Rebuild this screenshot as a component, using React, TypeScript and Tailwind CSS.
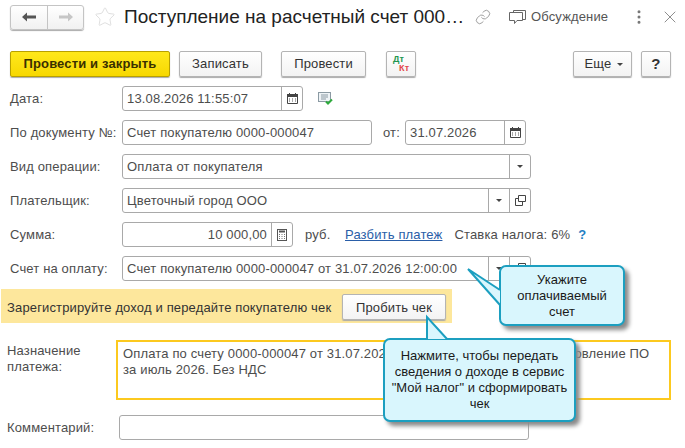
import { ReactNode } from "react"
import { Star, X, Link, EllipsisVertical } from "lucide-react"

function Btn({ className, children }: { className: string; children: ReactNode }) {
  return (
    <div
      className={
        "flex h-[26px] items-center justify-center rounded-[2px] border border-[#b4b4b4] bg-gradient-to-b from-white to-[#f3f3f3] text-[#333] shadow-[0_1px_1px_#aaa] " +
        className
      }
    >
      {children}
    </div>
  )
}

function CalendarIcon() {
  return (
    <svg width="13" height="13" viewBox="0 0 13 13" className="block">
      <path d="M1.5 2.5h10v9h-10z" fill="none" stroke="#444" />
      <path d="M1 2h11v3H1z" fill="#444" />
      <path d="M3.5 1v2M9.5 1v2" stroke="#444" />
      <path d="M3 7h1M6 7h1M9 7h1M3 9h1M6 9h1M9 9h1" stroke="#555" />
    </svg>
  )
}

function CalcIcon() {
  return (
    <svg width="12" height="14" viewBox="0 0 12 14" className="block">
      <rect x="1.5" y="1.5" width="9" height="11" fill="none" stroke="#555" />
      <path d="M3 3.5h6" stroke="#555" strokeWidth="2" />
      <path d="M3 6.5h1M5.5 6.5h1M8 6.5h1M3 8.5h1M5.5 8.5h1M8 8.5h1M3 10.5h1M5.5 10.5h1M8 10.5h1" stroke="#777" />
    </svg>
  )
}

function Caret() {
  return <div className="h-0 w-0 border-x-[3px] border-t-[3px] border-x-transparent border-t-[#444]" />
}

function OpenIcon() {
  return (
    <svg width="11" height="11" viewBox="0 0 11 11" className="block">
      <path d="M0.5 3.5h7v7h-7z" fill="none" stroke="#444" />
      <path d="M3.5 0.5h7v6h-7z" fill="#fff" stroke="#444" />
    </svg>
  )
}

function Side({ children, w = "w-[21px]" }: { children: ReactNode; w?: string }) {
  return <div className={"flex h-full shrink-0 items-center justify-center border-l border-[#a9a9a9] " + w}>{children}</div>
}

function Field({ className, children, text, right }: { className: string; children?: ReactNode; text?: string; right?: boolean }) {
  return (
    <div className={"flex h-[25px] items-center rounded-[3px] border border-[#a9a9a9] bg-white " + className}>
      <div className={"min-w-0 flex-1 truncate px-[4px] pt-[1px] text-[#4d4d4d] " + (right ? "text-right" : "")}>{text}</div>
      {children}
    </div>
  )
}

function Row({ label, children }: { label: string; children: ReactNode }) {
  return (
    <div className="mt-[9px] flex h-[25px] items-center pl-[10px]">
      <div className="w-[112px] shrink-0 pt-[1px] text-[#4d4d4d]">{label}</div>
      {children}
    </div>
  )
}

function Bubble({ className, tail, children }: { className: string; tail: string; children: ReactNode }) {
  return (
    <>
      <div
        className={
          "absolute flex flex-col items-center justify-center rounded-[7px] border-2 border-[#1c9fc0] bg-[#d9f6fd] text-center leading-[16px] tracking-normal text-[#1a1a1a] shadow-[4px_4px_4px_#8a8a8a] " +
          className
        }
      >
        {children}
      </div>
      <svg className="absolute top-0 left-0" width="685" height="448">
        <path d={tail} fill="#d9f6fd" stroke="#1c9fc0" strokeWidth="2" />
      </svg>
    </>
  )
}

export default function App() {
  return (
    <div className="relative h-[448px] w-[685px] overflow-hidden bg-white font-['Liberation_Sans',Arial,sans-serif] text-[13px] tracking-[0.15px]">
      {/* header */}
      <div className="flex h-[34px] items-center pl-[10px]">
        <div className="flex h-[25px] w-[74px] rounded-[3px] border border-[#c4c4c4] bg-gradient-to-b from-white to-[#f1f1f1] shadow-[0_1px_1px_#aaa]">
          <div className="flex w-[37px] items-center justify-center border-r border-[#c4c4c4]">
            <svg width="14" height="10" viewBox="0 0 14 10"><path d="M0 5l5-4.5v3h9v3H5v3z" fill="#555" /></svg>
          </div>
          <div className="flex flex-1 items-center justify-center">
            <svg width="14" height="10" viewBox="0 0 14 10"><path d="M14 5L9 .5v3H0v3h9v3z" fill="#c6c6c6" /></svg>
          </div>
        </div>
        <Star size={22} strokeWidth={1} className="ml-[10px] text-[#dcdcdc]" />
        <div className="ml-[8px] w-[334px] whitespace-nowrap text-[19px] tracking-normal text-[#222]">Поступление на расчетный счет 000…</div>
        <Link size={16} strokeWidth={1.2} className="ml-[17px] text-[#888]" />
        <svg width="17" height="16" viewBox="0 0 17 16" className="ml-[18px]">
          <path d="M4.5 3V1.5h12v9H14" fill="none" stroke="#666" />
          <path d="M.5 3.5h13v8H8l-2.5 3v-3h-5z" fill="#fff" stroke="#666" />
        </svg>
        <div className="ml-[5px] text-[#555]">Обсуждение</div>
        <EllipsisVertical size={18} className="ml-[22px] text-[#777]" />
        <X size={20} strokeWidth={1} className="ml-[12px] text-[#777]" />
      </div>

      {/* command bar */}
      <div className="mt-[17px] flex items-center pl-[10px]">
        <div className="flex h-[26px] w-[160px] items-center justify-center rounded-[2px] border border-[#b8a000] bg-gradient-to-b from-[#ffe81a] to-[#f7d800] font-bold text-[#3a3000] shadow-[0_1px_1px_#aaa]">
          Провести и закрыть
        </div>
        <Btn className="ml-[9px] w-[83px]">Записать</Btn>
        <Btn className="ml-[19px] w-[85px]">Провести</Btn>
        <Btn className="relative ml-[20px] w-[30px]">
          <span className="absolute top-[3px] left-[6px] text-[9px] leading-[8px] font-bold text-[#1e9650]">Дт</span>
          <span className="absolute top-[12px] left-[12px] text-[9px] leading-[8px] font-bold text-[#e2474b]">Кт</span>
        </Btn>
        <Btn className="ml-[157px] w-[59px] gap-[6px] pl-[3px]">
          Еще <Caret />
        </Btn>
        <Btn className="ml-[9px] w-[30px] text-[15px] font-bold text-[#222]">?</Btn>
      </div>

      {/* form */}
      <div className="mt-[1px]">
        <Row label="Дата:">
          <Field className="w-[181px]" text="13.08.2026 11:55:07">
            <Side>
              <CalendarIcon />
            </Side>
          </Field>
          <svg width="15" height="13" viewBox="0 0 15 13" className="ml-[15px]">
            <rect x="0.5" y="0.5" width="12" height="9" fill="#eef3f6" stroke="#8b9aa3" />
            <path d="M3 3h7M3 5h7M3 7h5" stroke="#8b9aa3" />
            <path d="M8 9.5l2 2 4-4" fill="none" stroke="#2eaa3c" strokeWidth="2" />
          </svg>
        </Row>
        <Row label="По документу №:">
          <Field className="w-[250px]" text="Счет покупателю 0000-000047" />
          <div className="ml-[11px] w-[22px] pt-[1px] text-[#4d4d4d]">от:</div>
          <Field className="w-[121px]" text="31.07.2026">
            <Side>
              <CalendarIcon />
            </Side>
          </Field>
        </Row>
        <Row label="Вид операции:">
          <Field className="w-[409px]" text="Оплата от покупателя">
            <Side>
              <Caret />
            </Side>
          </Field>
        </Row>
        <Row label="Плательщик:">
          <Field className="w-[409px]" text="Цветочный город ООО">
            <Side>
              <Caret />
            </Side>
            <Side>
              <OpenIcon />
            </Side>
          </Field>
        </Row>
        <Row label="Сумма:">
          <Field className="w-[171px]" text="10 000,00" right>
            <Side>
              <CalcIcon />
            </Side>
          </Field>
          <div className="ml-[12px] w-[40px] pt-[1px] text-[#4d4d4d]">руб.</div>
          <div className="pt-[1px] text-[#2a5ea8] underline">Разбить платеж</div>
          <div className="ml-[12px] pt-[1px] text-[#4d4d4d]">Ставка налога: 6%</div>
          <div className="ml-[8px] pt-[1px] font-bold text-[#1f7fc4]">?</div>
        </Row>
        <Row label="Счет на оплату:">
          <Field className="w-[409px]" text="Счет покупателю 0000-000047 от 31.07.2026 12:00:00">
            <Side>
              <Caret />
            </Side>
            <Side>
              <OpenIcon />
            </Side>
          </Field>
        </Row>

        {/* notice band */}
        <div className="mt-[8px] ml-[1px] flex h-[34px] w-[451px] items-center bg-[#fde79c] pl-[6px]">
          <div className="mt-[3px] w-[335px] text-[#333]">Зарегистрируйте доход и передайте покупателю чек</div>
          <Btn className="mt-[2px] w-[104px]">
            <span className="pt-[1px]">Пробить чек</span>
          </Btn>
        </div>

        {/* purpose */}
        <div className="mt-[17px] flex pl-[7px]">
          <div className="w-[109px] pt-[3px] leading-[16px] text-[#4d4d4d]">
            Назначение
            <br />
            платежа:
          </div>
          <div className="h-[60px] w-[555px] border-2 border-[#fcc91f] px-[5px] pt-[4px] leading-[16px] text-[#4d4d4d]">
            <div className="whitespace-nowrap">Оплата по счету 0000-000047 от 31.07.2026 г., за техобслуживание и обновление ПО</div>
            <div>за июль 2026. Без НДС</div>
          </div>
        </div>

        <div className="mt-[15px] flex h-[25px] items-center pl-[7px]">
          <div className="w-[112px] pt-[1px] text-[#4d4d4d]">Комментарий:</div>
          <div className="h-full w-[410px] rounded-[3px] border border-[#a9a9a9] bg-white" />
        </div>
      </div>

      {/* callouts */}
      <Bubble className="top-[265px] left-[499px] h-[61px] w-[126px]" tail="M500 290L468 269L500 305">
        <div>Укажите</div>
        <div>оплачиваемый</div>
        <div>счет</div>
      </Bubble>
      <Bubble className="top-[338px] left-[383px] h-[84px] w-[193px]" tail="M427 339V317L447 339">
        <div>Нажмите, чтобы передать</div>
        <div>сведения о доходе в сервис</div>
        <div>"Мой налог" и сформировать</div>
        <div>чек</div>
      </Bubble>
    </div>
  )
}
